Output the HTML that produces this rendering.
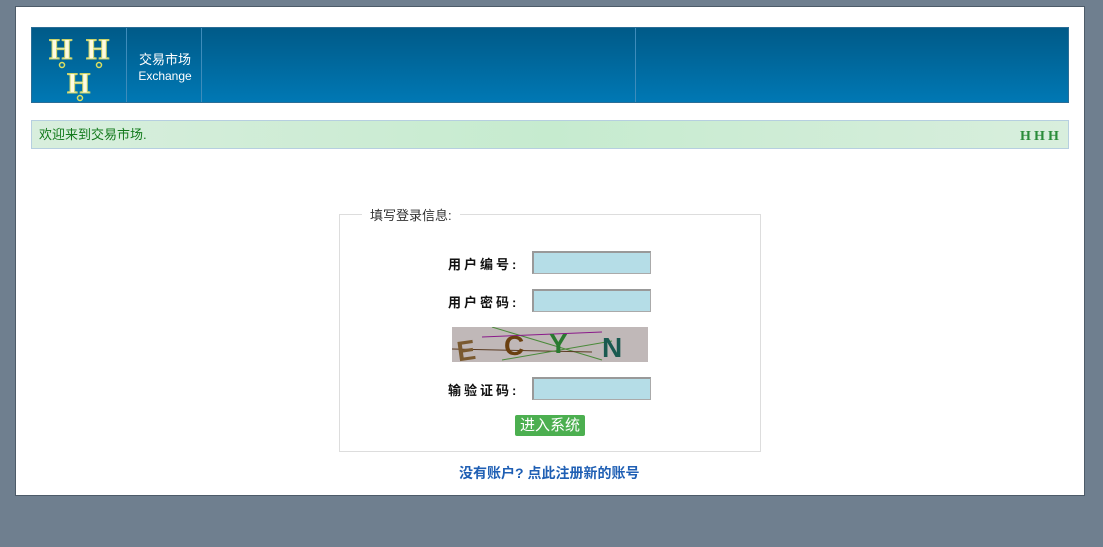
<!DOCTYPE html>
<html><head><meta charset="utf-8"><style>
body{margin:0;background:#6f7f8f;width:1103px;height:547px;overflow:hidden;font-family:"Liberation Sans","Noto Sans CJK SC",sans-serif}
.page{position:absolute;left:15px;top:6px;width:1068px;height:488px;background:#fff;border:1px solid #4d5b69}
.hdr{position:absolute;left:15px;top:20px;width:1036px;height:74px;background:linear-gradient(#005a88,#0078b4);border:1px solid #2a6d96}
.sep{position:absolute;top:0;width:1px;height:74px;background:#3e8cbb}
.t{position:absolute;left:96px;top:24px;width:74px;text-align:center;color:#fff;font-size:13px;line-height:16px}
.t span{font-size:12px}
.bar{position:absolute;left:15px;top:113px;width:1036px;height:27px;border:1px solid #b6cfe0;background:linear-gradient(90deg,#d8eedd,#c6ebcf 50%,#d8eedd);}
.bar div{position:absolute;left:7px;top:3px;font-size:13px;color:#137a1c}
fieldset{position:absolute;left:323px;top:198px;width:420px;height:245px;border:1px solid #ddd;margin:0;padding:0}
legend{font-size:13px;color:#333;margin-left:22px;padding:0 8px}
.lbl{position:absolute;font-size:13px;font-weight:bold;letter-spacing:3px;color:#111}
.in{position:absolute;width:116px;height:20px;background:#b5dde7;border:1px solid #aaa;border-top:2px solid #999;border-left:2px solid #999}
.btn{position:absolute;left:499px;top:408px;width:70px;height:21px;background:#4caf50;color:#fff;font-size:15px;text-align:center;line-height:21px;border-radius:2px}
.reg{position:absolute;left:443px;top:456px;font-size:14px;color:#1f5fb4;font-weight:bold}
</style></head><body>
<div class="page">
<div class="hdr">
<svg width="96" height="74" style="position:absolute;left:0;top:0">
<g fill="#fffbe0" stroke="#c8d26a" stroke-width="1" font-family="Liberation Serif" font-weight="bold" font-size="30">
<text x="17" y="31">H</text><text x="54" y="31">H</text><text x="35" y="65">H</text></g>
<g fill="none" stroke="#dde060" stroke-width="1.5"><circle cx="30" cy="37" r="2.5"/><circle cx="67" cy="37" r="2.5"/><circle cx="48" cy="70" r="2.5"/></g>
</svg>
<div class="sep" style="left:94px"></div><div class="sep" style="left:169px"></div><div class="sep" style="left:603px"></div>
<div class="t">交易市场<br><span>Exchange</span></div>
</div>
<div class="bar"><div>欢迎来到交易市场.</div>
<svg width="42" height="16" style="position:absolute;right:6px;top:6px"><g fill="#2a8c3a" font-family="Liberation Serif" font-weight="bold" font-size="14"><text x="0" y="13">H</text><text x="14" y="13">H</text><text x="28" y="13">H</text></g></svg></div>
<fieldset><legend>填写登录信息:</legend></fieldset>
<div class="lbl" style="left:432px;top:247px">用户编号:</div><div class="in" style="left:516px;top:244px"></div>
<div class="lbl" style="left:432px;top:285px">用户密码:</div><div class="in" style="left:516px;top:282px"></div>
<svg style="position:absolute;left:436px;top:320px" width="196" height="35"><rect width="196" height="35" fill="#c0b8b8"/>
<g stroke-width="1"><line x1="40" y1="0" x2="150" y2="33" stroke="#4a8a3a"/><line x1="0" y1="22" x2="140" y2="25" stroke="#5a3a20"/><line x1="30" y1="10" x2="150" y2="5" stroke="#8a1a8a"/><line x1="50" y1="33" x2="160" y2="14" stroke="#4a8a3a"/></g>
<g font-family="Liberation Sans" font-weight="bold" font-size="28"><text x="5" y="33" fill="#7a5a30" transform="rotate(-8 15 25)">E</text><text x="52" y="28" fill="#6a4010">C</text><text x="97" y="26" fill="#2a7a30">Y</text><text x="150" y="30" fill="#1a5a50">N</text></g></svg>
<div class="lbl" style="left:432px;top:373px">输验证码:</div><div class="in" style="left:516px;top:370px"></div>
<div class="btn">进入系统</div>
<div class="reg">没有账户? 点此注册新的账号</div>
</div>
</body></html>
